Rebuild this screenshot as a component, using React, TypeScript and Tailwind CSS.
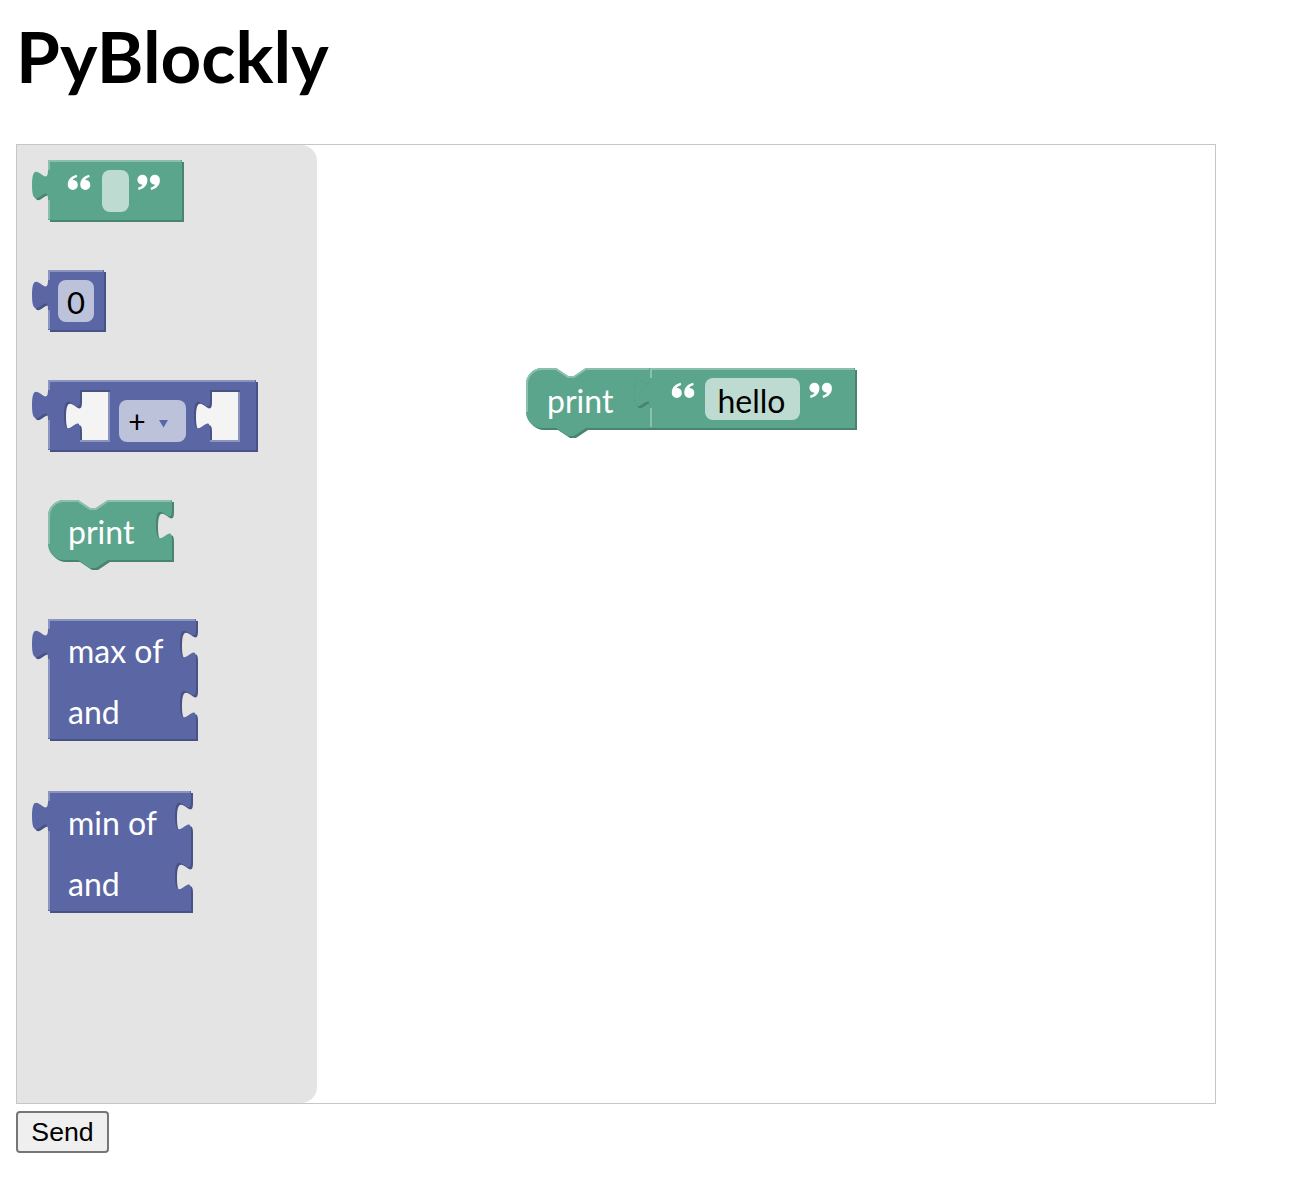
import React from "react";

const GREEN = "#5ba58c";
const GREEN_L = "#8cc0ae";
const GREEN_D = "#498470";
const BLUE = "#5b67a5";
const BLUE_L = "#8c95c0";
const BLUE_D = "#495284";
const GREEN_F = "#bddbd1";
const BLUE_F = "#bdc2db";
const HOLE = "#f4f4f4";
const FONT = "Lato, sans-serif";

const TAB_UP = "c 0,-20 -16,16 -16,-15 s 16,5 16,-15";
const SOCKET_DOWN = "c 0,20 -16,-16 -16,15 s 16,-5 16,15";
const NOTCH_R = "l 12,8 6,0 12,-8";
const NOTCH_L = "l -12,8 -6,0 -12,-8";

const MARK =
  "M10.4,5.2 C10.4,10.6 7.4,13.8 1.6,15.4 L1,13.2 C3.8,12.2 5.4,11 5.4,10.2 A5,5 0 1 1 10.4,5.2 Z";

function valuePath(bx: number, W: number, H: number) {
  return `M${bx},0 H${bx + W} V${H} H${bx} V40 ${TAB_UP} Z`;
}
function holePath(hx: number, hy: number, hw: number, hh: number) {
  return `M${hx},${hy} H${hx + hw} V${hy + hh} H${hx} V${hy + 40} ${TAB_UP} Z`;
}
function valueHighlight(bx: number, W: number, H: number) {
  return `M${bx},1 H${bx + W - 1} M${bx + 1},1 V10 M${bx + 1},40 V${H - 1}`;
}
function printPath(bx: number, W: number, H: number) {
  return `M${bx},16 A16,16 0 0 1 ${bx + 16},0 H${bx + 30} ${NOTCH_R} H${bx + W} V10 ${SOCKET_DOWN} V${H} H${bx + 60} ${NOTCH_L} H${bx + 16} A16,16 0 0 1 ${bx},${H - 16} Z`;
}
function printHighlight(bx: number, W: number, H: number) {
  return `M${bx + 1},${H - 16} V16 A15,15 0 0 1 ${bx + 16},1 H${bx + 30} l12,8 6,0 12,-8 H${bx + W - 1}`;
}
function twoRowPath(bx: number, W: number) {
  return `M${bx},0 H${bx + W} V10 ${SOCKET_DOWN} V70 ${SOCKET_DOWN} V120 H${bx} V40 ${TAB_UP} Z`;
}

function Shape({
  d,
  fill,
  dark,
  light,
  highlight,
}: {
  d: string;
  fill: string;
  dark: string;
  light: string;
  highlight: string;
}) {
  return (
    <>
      <path d={d} fill={dark} fillRule="evenodd" transform="translate(2,2)" />
      <path d={d} fill={fill} fillRule="evenodd" />
      <path d={highlight} fill="none" stroke={light} strokeWidth={2} />
    </>
  );
}

function Quote({ x, y, open }: { x: number; y: number; open: boolean }) {
  return (
    <g transform={`translate(${x},${y})`} fill="#fff">
      {open ? (
        <>
          <path d={MARK} transform="rotate(180 5.6 7.8)" />
          <path d={MARK} transform="translate(12.5,0) rotate(180 5.6 7.8)" />
        </>
      ) : (
        <>
          <path d={MARK} />
          <path d={MARK} transform="translate(12.5,0)" />
        </>
      )}
    </g>
  );
}

function Label({
  x,
  y,
  children,
  color = "#fff",
  anchor = "start",
  size = 32,
}: {
  x: number;
  y: number;
  children: React.ReactNode;
  color?: string;
  anchor?: "start" | "middle";
  size?: number;
}) {
  return (
    <text x={x} y={y} fill={color} fontFamily={FONT} fontSize={size} textAnchor={anchor}>
      {children}
    </text>
  );
}

function TextBlockFlyout() {
  const bx = 16,
    W = 134,
    H = 60;
  return (
    <svg width={152} height={62} className="block shrink-0">
      <Shape d={valuePath(bx, W, H)} fill={GREEN} dark={GREEN_D} light={GREEN_L} highlight={valueHighlight(bx, W, H)} />
      <Quote x={35} y={14.5} open />
      <rect x={70} y={10} width={27} height={42} rx={8} fill={GREEN_F} />
      <Quote x={105} y={14.5} open={false} />
    </svg>
  );
}

function NumberBlock() {
  const bx = 16,
    W = 56,
    H = 60;
  return (
    <svg width={74} height={62} className="block shrink-0">
      <Shape d={valuePath(bx, W, H)} fill={BLUE} dark={BLUE_D} light={BLUE_L} highlight={valueHighlight(bx, W, H)} />
      <rect x={26} y={10} width={36} height={42} rx={8} fill={BLUE_F} />
      <Label x={44} y={44} color="#000" anchor="middle" size={31}>
        0
      </Label>
    </svg>
  );
}

function ArithBlock() {
  const bx = 16,
    W = 208,
    H = 70;
  const h1 = holePath(48, 10, 30, 52);
  const h2 = holePath(178, 10, 30, 52);
  const d = `${valuePath(bx, W, H)} ${h1} ${h2}`;
  return (
    <svg width={226} height={72} className="block shrink-0">
      <path d={h1} fill={HOLE} />
      <path d={h2} fill={HOLE} />
      <Shape d={d} fill={BLUE} dark={BLUE_D} light={BLUE_L} highlight={valueHighlight(bx, W, H)} />
      <path d="M48,61 H77 V12 M178,61 H207 V12" fill="none" stroke={BLUE_L} strokeWidth={2} />
      <rect x={87} y={20} width={67} height={42} rx={8} fill={BLUE_F} />
      <Label x={105} y={53} color="#000" anchor="middle" size={30}>
        +
      </Label>
      <path d="M127,40 L136,40 L131.5,47.5 Z" fill={BLUE} />
    </svg>
  );
}

function PrintBlockFlyout() {
  const bx = 16,
    W = 124,
    H = 60;
  return (
    <svg width={142} height={70} className="block shrink-0">
      <Shape d={printPath(bx, W, H)} fill={GREEN} dark={GREEN_D} light={GREEN_L} highlight={printHighlight(bx, W, H)} />
      <Label x={36} y={44}>
        print
      </Label>
    </svg>
  );
}

function TwoRowBlock({ W, top }: { W: number; top: string }) {
  const bx = 16;
  return (
    <svg width={16 + W + 2} height={122} className="block shrink-0">
      <Shape d={twoRowPath(bx, W)} fill={BLUE} dark={BLUE_D} light={BLUE_L} highlight={valueHighlight(bx, W, 120)} />
      <Label x={36} y={44}>
        {top}
      </Label>
      <Label x={36} y={105}>
        and
      </Label>
    </svg>
  );
}

function WorkspacePrint() {
  const tbx = 124,
    TW = 205,
    H = 60;
  return (
    <svg width={331} height={70} className="block">
      <Shape d={printPath(0, 124, H)} fill={GREEN} dark={GREEN_D} light={GREEN_L} highlight={printHighlight(0, 124, H)} />
      <Shape d={valuePath(tbx, TW, H)} fill={GREEN} dark={GREEN_D} light={GREEN_L} highlight={valueHighlight(tbx, TW, H)} />
      <Label x={21} y={45}>
        print
      </Label>
      <Quote x={145} y={14.5} open />
      <rect x={179} y={10} width={95} height={42} rx={8} fill={GREEN_F} />
      <Label x={225.5} y={45} color="#000" anchor="middle">
        hello
      </Label>
      <Quote x={283} y={14.5} open={false} />
    </svg>
  );
}

export default function App() {
  return (
    <div className="min-h-screen bg-white px-4">
      <h1 className="m-0 pt-[14px] font-['Lato',sans-serif] text-[71px] font-bold leading-[84px] text-black">
        PyBlockly
      </h1>
      <div className="relative mt-[46px] h-[960px] w-[1200px] border border-[#c6c6c6] bg-white">
        <div className="flex h-full w-[300px] flex-col gap-[48px] rounded-r-[16px] bg-[#e4e4e4] pl-[15px] pt-[15px]">
          <TextBlockFlyout />
          <NumberBlock />
          <ArithBlock />
          <PrintBlockFlyout />
          <div className="mt-px">
            <TwoRowBlock W={148} top="max of" />
          </div>
          <div className="mt-[2px]">
            <TwoRowBlock W={143} top="min of" />
          </div>
        </div>
        <div className="absolute left-[509px] top-[223px]">
          <WorkspacePrint />
        </div>
      </div>
      <button className="mt-[7px] block h-[42px] w-[93px] rounded-[4px] border-2 border-[#767676] bg-[#efefef] font-['Liberation_Sans',Arial,sans-serif] text-[26.67px] leading-none text-black">
        Send
      </button>
    </div>
  );
}
